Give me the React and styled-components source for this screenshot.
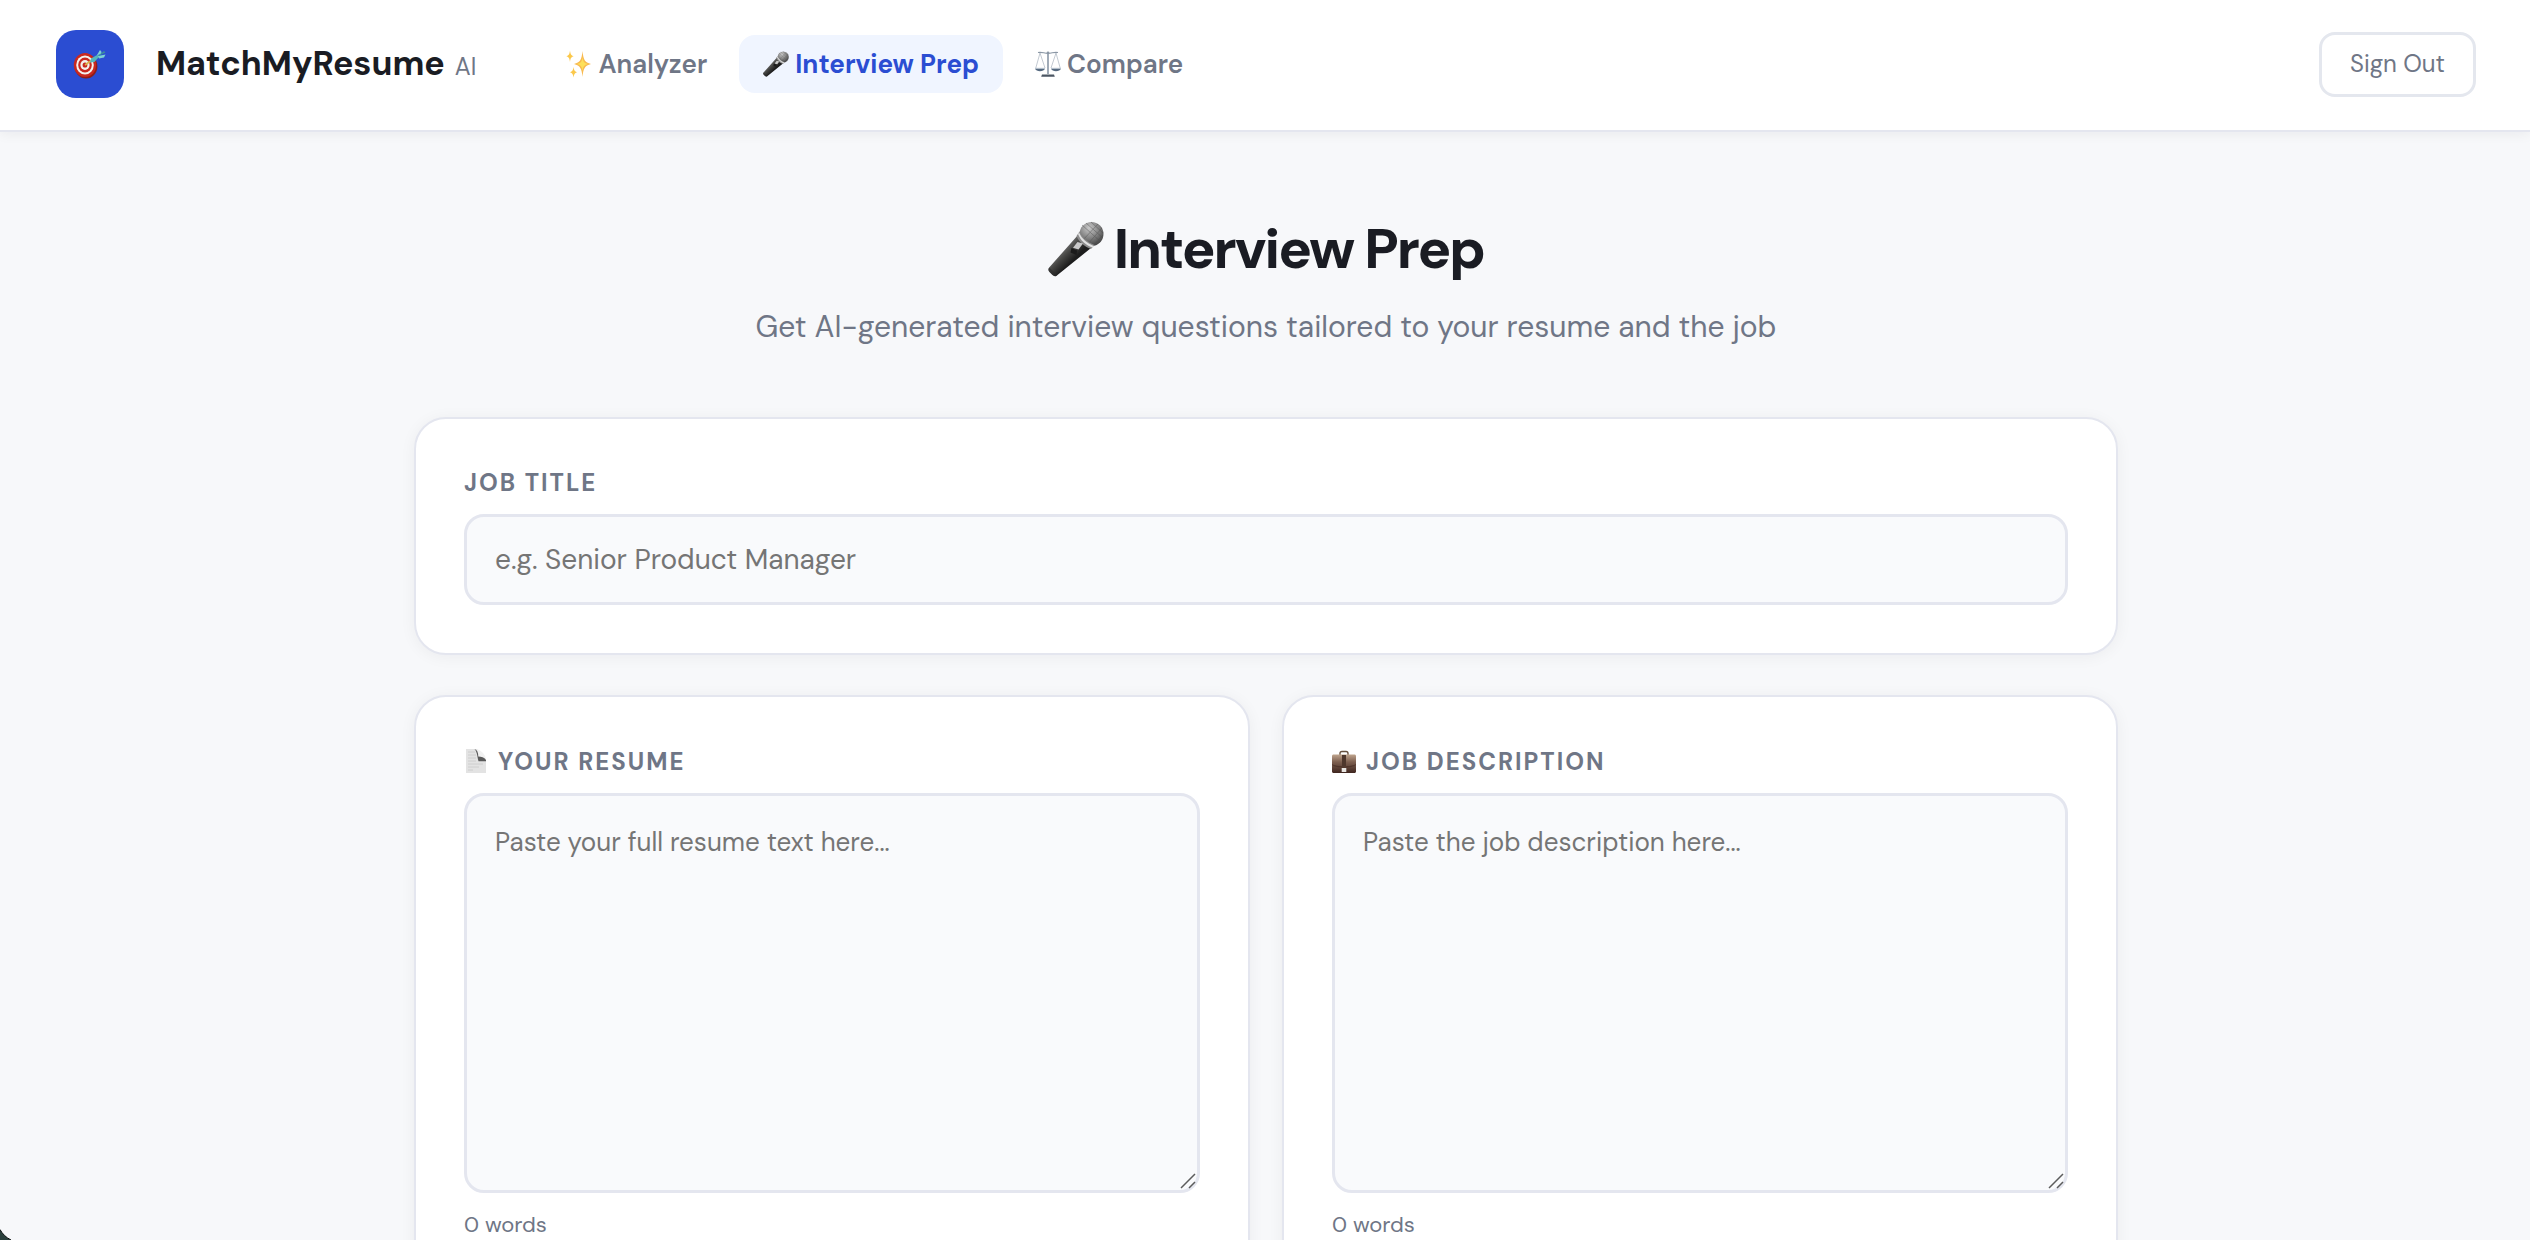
import React, { useState } from "react";
import styled, { createGlobalStyle } from "styled-components";

const GlobalStyle = createGlobalStyle`
  * { box-sizing: border-box; }
  html, body, #root { height: 100%; }
  body {
    margin: 0;
    overflow: hidden;
    background: #f7f8fa;
    color: #1a1c23;
    font-family: "DM Sans", Inter, "Liberation Sans", sans-serif;
  }
`;

const Page = styled.div`
  display: flex;
  flex-direction: column;
  min-height: 100%;
`;

const Header = styled.header`
  display: flex;
  align-items: center;
  justify-content: space-between;
  height: 132px;
  padding: 0 54px 2px 56px;
  background: #fff;
  border-bottom: 2px solid #e4e6ef;
  box-shadow: 0 2px 12px rgba(20, 24, 40, 0.06);
`;

const HeaderSide = styled.div`
  display: flex;
  align-items: center;
`;

const Logo = styled.span`
  display: flex;
  align-items: center;
  justify-content: center;
  width: 68px;
  height: 68px;
  margin-right: 32px;
  border-radius: 20px;
  background: #2b4dd2;
`;

const Brand = styled.span`
  font-size: 34px;
  line-height: 44px;
  font-weight: 700;
`;

const BrandSuffix = styled.span`
  margin-left: 10px;
  font-size: 24px;
  line-height: 24px;
  font-weight: 400;
  color: #6f7686;
`;

const Nav = styled.nav`
  display: flex;
  gap: 8px;
  margin-left: 66px;
`;

const NavLink = styled.a`
  display: flex;
  align-items: center;
  gap: 6px;
  height: 58px;
  padding: 0 24px;
  border-radius: 16px;
  background: ${(p) => (p.$active ? "#f0f5ff" : "transparent")};
  color: ${(p) => (p.$active ? "#2b4dd2" : "#6f7686")};
  font-size: 26px;
  line-height: 34px;
  font-weight: ${(p) => (p.$active ? 700 : 600)};
  text-decoration: none;
`;

const SignOut = styled.button`
  height: 65px;
  padding: 0 28px;
  border: 3px solid #e4e7ee;
  border-radius: 16px;
  background: #fff;
  color: #6f7686;
  font-family: inherit;
  font-size: 24px;
  line-height: 32px;
  cursor: pointer;
`;

const Main = styled.main`
  width: 100%;
  max-width: 1798px;
  margin: 0 auto;
  padding: 80px 46px 80px 48px;
`;

const Intro = styled.div`
  display: flex;
  flex-direction: column;
  align-items: center;
  gap: 14px;
  margin-bottom: 62px;
`;

const Title = styled.h1`
  display: flex;
  align-items: center;
  gap: 10px;
  margin: 0;
  font-size: 56px;
  line-height: 73px;
  font-weight: 800;
  letter-spacing: -2px;
`;

const Subtitle = styled.p`
  margin: 0;
  color: #6f7686;
  font-size: 30px;
  line-height: 56px;
`;

const Cards = styled.div`
  display: grid;
  grid-template-columns: 1fr 1fr;
  gap: 40px 32px;
`;

const Card = styled.section`
  grid-column: ${(p) => (p.$wide ? "1 / -1" : "auto")};
  padding: 48px;
  border: 2px solid #e4e6ef;
  border-radius: 32px;
  background: #fff;
  box-shadow: 0 2px 16px rgba(20, 24, 40, 0.05);
`;

const Label = styled.label`
  display: flex;
  align-items: center;
  gap: 10px;
  height: ${(p) => (p.$withIcon ? "32px" : "31px")};
  margin-bottom: 16px;
  color: #6f7686;
  font-size: 24px;
  line-height: 31px;
  font-weight: 700;
  letter-spacing: 2px;
  text-transform: uppercase;
`;

const TextInput = styled.input`
  display: block;
  width: 100%;
  height: 91px;
  padding: 0 28px;
  border: 3px solid #e4e6ef;
  border-radius: 20px;
  background: #f9fafc;
  color: #1a1c23;
  font-family: inherit;
  font-size: 28px;
  &::placeholder { color: #757575; }
`;

const AreaFrame = styled.div`
  position: relative;
`;

const TextArea = styled.textarea`
  display: block;
  width: 100%;
  height: 400px;
  padding: 24px 28px;
  border: 3px solid #e4e6ef;
  border-radius: 20px;
  background: #f9fafc;
  color: #1a1c23;
  font-family: inherit;
  font-size: 26px;
  line-height: 44px;
  resize: none;
  &::placeholder { color: #757575; }
`;

const Grip = styled.svg`
  position: absolute;
  right: 4px;
  bottom: 4px;
  pointer-events: none;
`;

const WordCount = styled.p`
  margin: 16px 0 0;
  color: #6f7686;
  font-size: 22px;
  line-height: 32px;
`;

const Corner = styled.svg`
  position: fixed;
  left: 0;
  bottom: 0;
`;

function TargetIcon() {
  return (
    <svg width="34" height="30" viewBox="0 0 34 30" aria-hidden="true">
      <ellipse cx="13" cy="17.6" rx="11.4" ry="12" fill="#8e1d18" />
      <ellipse cx="12" cy="16" rx="11.2" ry="12" fill="#c9281f" />
      <ellipse cx="12" cy="16" rx="8.8" ry="9.6" fill="#f4f1ee" />
      <ellipse cx="12" cy="16" rx="6.8" ry="7.4" fill="#c9281f" />
      <ellipse cx="12" cy="16" rx="4.6" ry="5" fill="#f4f1ee" />
      <ellipse cx="12" cy="16" rx="2.4" ry="2.6" fill="#c9281f" />
      <path d="M12 16l7-5" stroke="#d9b34a" strokeWidth="1.6" />
      <path d="M17 13.5l1-4 7-4 1.4 2-5 5.500z" fill="#55b7bd" />
      <path d="M24 6l3-5 1.600 2-1 2.500zM25 7l7.500-1.500-1.500 3-5 1z" fill="#7cd3d3" />
      <path d="M24 7.500L31 2l1.500 1.500z" fill="#3b8f9c" />
    </svg>
  );
}

function SparklesIcon() {
  return (
    <svg width="26" height="28" viewBox="0 0 26 28" aria-hidden="true">
      <path d="M16.500 1c.9 8.500 2.200 11.500 8.500 13-6.300 1.500-7.600 4.500-8.500 13-.9-8.500-2.200-11.500-8.500-13 6.300-1.500 7.600-4.500 8.500-13z" fill="#f8b950" />
      <path d="M16.500 7c.6 5 1.800 6 5.500 7-3.700 1-4.900 2.400-5.500 7-.6-4.600-1.800-6-5.500-7 3.700-1 4.900-2 5.500-7z" fill="#fde05a" />
      <path d="M4 .500c.5 3.700 1 5 3.800 5.700C5 6.900 4.500 8.200 4 12c-.5-3.800-1-5.100-3.800-5.800C3 5.500 3.500 4.200 4 .500z" fill="#fbc84a" />
      <path d="M7.500 17c.5 3.200 1 4.500 3.500 5.300-2.500.7-3 2-3.500 5.200-.5-3.200-1-4.500-3.500-5.200C6.500 21.500 7 20.200 7.500 17z" fill="#fbc84a" />
    </svg>
  );
}

function MicIcon({ size }) {
  return (
    <svg width={size} height={size} viewBox="0 0 56 56" aria-hidden="true">
      <defs>
        <linearGradient id={`micBody${size}`} x1="14" y1="26" x2="26" y2="38" gradientUnits="userSpaceOnUse">
          <stop offset="0" stopColor="#777" />
          <stop offset="0.450" stopColor="#484846" />
          <stop offset="1" stopColor="#1d1d1d" />
        </linearGradient>
        <radialGradient id={`micHead${size}`} cx="0.400" cy="0.250" r="0.800">
          <stop offset="0" stopColor="#c9c9c9" />
          <stop offset="0.500" stopColor="#858585" />
          <stop offset="1" stopColor="#3c3c3c" />
        </radialGradient>
      </defs>
      <path d="M30 14L1.200 46.500c-1.200 1.500-1 3 .3 4.600l3 3c1.500 1.300 3.300 1.400 4.700.2L43 27z" fill={`url(#micBody${size})`} />
      <path d="M1.200 46.500l8 7.800-1 .7c-1.300.6-2.600.2-3.700-.9l-3-3c-1.300-1.600-1.500-3.100-.3-4.600z" fill="#2b2b2b" opacity="0.600" />
      <circle cx="43.500" cy="13" r="12" fill={`url(#micHead${size})`} />
      <path d="M34 4l19 17M38 2l17 15M43 1l12 11M34 20L50 3M39 24L54 7M45 25l10-11" stroke="#4a4a4a" strokeWidth="0.700" opacity="0.600" />
      <path d="M31.500 10.500c3 6.500 7.500 10.500 15 13.500l-3.500 4c-7-2.500-12-7-14.500-13z" fill="#8b8b8b" />
      <path d="M31 11.500c3 6.500 7.500 10.500 14.800 13.500l-1.500 1.500C37.500 24 32.500 19.500 30 13z" fill="#e1e1e1" />
      <path d="M29.500 21l5.500 1.500-4.500 6-5.500-1.700z" fill="#c9c9c9" />
      <path d="M23.500 27l5.500 2.500-.5 4.500-6-2.500z" fill="#1b1b1b" />
    </svg>
  );
}

function ScalesIcon() {
  return (
    <svg width="26" height="26" viewBox="0 0 26 26" fill="none" aria-hidden="true">
      <path d="M3 1.500c4-.8 6 .8 10 .8s6-1.600 10-.8" stroke="#8b97a5" strokeWidth="1.200" />
      <circle cx="13" cy="1.800" r="1.400" fill="#8b97a5" />
      <path d="M13 3v20" stroke="#8996a6" strokeWidth="1.600" />
      <path d="M5 2L.8 17M5 2l5 15M21 2l-5 15M21 2l4.200 15" stroke="#b4bcc6" strokeWidth="0.800" />
      <path d="M0 17.500h10c-1 3.500-9 3.500-10 0zM16 17.500h10c-1 3.500-9 3.500-10 0z" fill="#566a80" />
      <path d="M0 17.300h10M16 17.300h10" stroke="#b9c4d0" strokeWidth="0.900" />
      <path d="M7 23.500h12l.8 2.300H6.200z" fill="#4b5663" />
    </svg>
  );
}

function PageIcon() {
  return (
    <svg width="24" height="24" viewBox="0 0 24 24" aria-hidden="true">
      <path d="M2 0h11l9 10v14H2z" fill="#e3e3e3" />
      <path d="M13 0c5 2 8 5.500 9 10v2l-8-2z" fill="#f1f1f1" />
      <path d="M10.500 0c2.700.8 3.800 3.500 3.800 7.500 3 0 6 .8 7.700 3.500v1.200h-7.500C13.200 8 13.500 3.500 10.500 0z" fill="#5a5a5a" />
      <path d="M4 3h7M4 6h8M4 9h8M4 12h8M4 15h15M4 18h11M4 21h5" stroke="#c9c9c9" strokeWidth="0.800" />
    </svg>
  );
}

function BriefcaseIcon() {
  return (
    <svg width="24" height="24" viewBox="0 0 24 24" aria-hidden="true">
      <defs>
        <linearGradient id="caseLeather" x1="0" y1="0" x2="0" y2="1">
          <stop offset="0" stopColor="#c0a58e" />
          <stop offset="0.400" stopColor="#7e6050" />
          <stop offset="1" stopColor="#3f261f" />
        </linearGradient>
      </defs>
      <path d="M8 6V4.500c0-1.500.7-2 2-2h4c1.300 0 2 .5 2 2V6" fill="none" stroke="#66503f" strokeWidth="1.400" />
      <path d="M1.500 5.500h21c.8 0 1.500.7 1.500 1.500v15.500c0 .8-.7 1.500-1.500 1.500h-21C.7 24 0 23.300 0 22.500V7c0-.8.7-1.500 1.500-1.500z" fill="url(#caseLeather)" />
      <path d="M0 15c4 3 20 3 24 0v1c-4 3.500-20 3.500-24 0z" fill="#3b241c" opacity="0.500" />
      <path d="M10 6h4v11h-4z" fill="#4e372c" />
      <path d="M9.700 19h4.600v4H9.700z" fill="#e8e5e1" />
    </svg>
  );
}

function PasteCard({ id, icon, label, placeholder }) {
  const [text, setText] = useState("");
  const words = text.trim() ? text.trim().split(/\s+/).length : 0;
  return (
    <Card>
      <Label htmlFor={id} $withIcon>
        {icon}
        {label}
      </Label>
      <AreaFrame>
        <TextArea id={id} placeholder={placeholder} value={text} onChange={(e) => setText(e.target.value)} />
        <Grip width="16" height="16" viewBox="0 0 16 16" aria-hidden="true">
          <path d="M1 15L15 1M9 15l6-6" stroke="#5c5c5c" strokeWidth="1.500" />
        </Grip>
      </AreaFrame>
      <WordCount>{words} words</WordCount>
    </Card>
  );
}

export default function App() {
  return (
    <Page>
      <GlobalStyle />
      <Header>
        <HeaderSide>
          <Logo>
            <TargetIcon />
          </Logo>
          <Brand>
            MatchMyResume<BrandSuffix>AI</BrandSuffix>
          </Brand>
          <Nav>
            <NavLink href="#analyzer">
              <SparklesIcon />
              Analyzer
            </NavLink>
            <NavLink href="#interview" $active aria-current="page">
              <MicIcon size={26} />
              Interview Prep
            </NavLink>
            <NavLink href="#compare">
              <ScalesIcon />
              Compare
            </NavLink>
          </Nav>
        </HeaderSide>
        <SignOut type="button">Sign Out</SignOut>
      </Header>
      <Main>
        <Intro>
          <Title>
            <MicIcon size={56} />
            Interview Prep
          </Title>
          <Subtitle>Get AI-generated interview questions tailored to your resume and the job</Subtitle>
        </Intro>
        <Cards>
          <Card $wide>
            <Label htmlFor="job-title">Job Title</Label>
            <TextInput id="job-title" type="text" placeholder="e.g. Senior Product Manager" />
          </Card>
          <PasteCard id="resume" icon={<PageIcon />} label="Your Resume" placeholder="Paste your full resume text here..." />
          <PasteCard id="job" icon={<BriefcaseIcon />} label="Job Description" placeholder="Paste the job description here..." />
        </Cards>
      </Main>
      <Corner width="12" height="12" viewBox="0 0 12 12" aria-hidden="true">
        <path d="M0 1.500C2.500 6 6 9.500 11 12H0z" fill="#2b403d" />
        <path d="M0 1.500C2.500 6 6 9.500 11 12" fill="none" stroke="#0b0f0f" />
      </Corner>
    </Page>
  );
}
